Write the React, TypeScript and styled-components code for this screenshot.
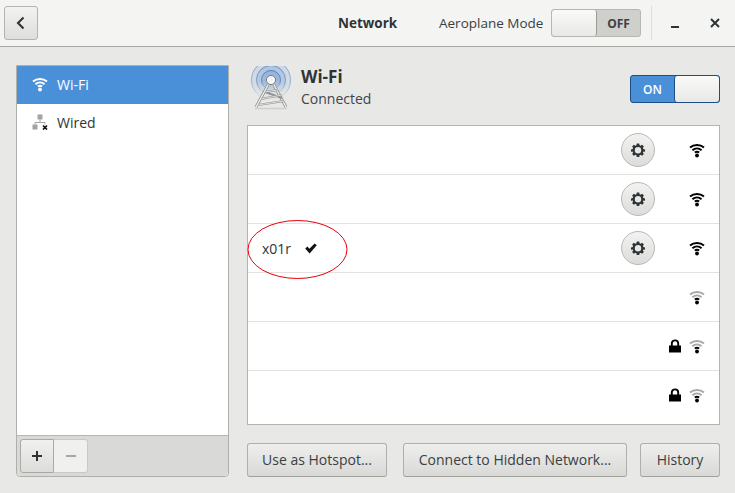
import React from "react";
import styled, { createGlobalStyle } from "styled-components";

const GlobalStyle = createGlobalStyle`
  html, body {
    margin: 0;
    padding: 0;
    width: 735px;
    height: 493px;
    overflow: hidden;
    background: #e8e8e7;
  }
  body {
    font-family: "Open Sans", "Noto Sans", sans-serif;
    font-size: 14px;
    color: #2e3436;
  }
`;

const WifiIcon = ({ color = "#000", faded = false, size = 16 }: { color?: string; faded?: boolean; size?: number }) => (
  <svg width={size} height={size} viewBox="0 0 16 16" fill="none">
    <path d="M1 5.6C4.9 2.2 11.1 2.2 15 5.6" stroke={faded ? "#a8a8a8" : color} strokeWidth="2" />
    <path d="M3.4 8.2C6.1 6 9.9 6 12.6 8.2" stroke={faded ? "#a8a8a8" : color} strokeWidth="2" />
    <path d="M5.8 10.6C7.2 9.5 8.8 9.5 10.2 10.6" stroke={color} strokeWidth="1.9" />
    <circle cx="8" cy="13.5" r="1.9" fill={color} />
  </svg>
);

const WiredIcon = () => (
  <svg width="16" height="16" viewBox="0 0 16 16">
    <rect x="5.5" y="0.5" width="5" height="5" fill="#a3a3a3" />
    <rect x="0.5" y="10.5" width="5" height="5" fill="#a3a3a3" />
    <path d="M8 5.5V8.5M3 10.5V8.5H13V10.5" stroke="#a3a3a3" strokeWidth="1" fill="none" />
    <path d="M11 11.5L15 15.5M15 11.5L11 15.5" stroke="#111" strokeWidth="1.7" />
  </svg>
);

const TowerIcon = () => (
  <svg width="44" height="46" viewBox="0 0 44 46" fill="none">
    <defs>
      <linearGradient id="waveFill" x1="0" y1="0" x2="0" y2="1">
        <stop offset="0" stopColor="#7fa4d8" stopOpacity="0.55" />
        <stop offset="0.55" stopColor="#7fa4d8" stopOpacity="0.45" />
        <stop offset="1" stopColor="#7fa4d8" stopOpacity="0" />
      </linearGradient>
      <linearGradient id="waveLine" x1="0" y1="0" x2="0" y2="1">
        <stop offset="0" stopColor="#4a78b8" stopOpacity="0.85" />
        <stop offset="0.6" stopColor="#4a78b8" stopOpacity="0.7" />
        <stop offset="1" stopColor="#4a78b8" stopOpacity="0" />
      </linearGradient>
    </defs>
    <circle cx="22" cy="14" r="20" fill="url(#waveFill)" opacity="0.45" />
    <circle cx="22" cy="14" r="19.5" stroke="url(#waveLine)" strokeWidth="1" opacity="0.6" />
    <circle cx="22" cy="14" r="15" fill="url(#waveFill)" opacity="0.7" />
    <circle cx="22" cy="14" r="14.5" stroke="url(#waveLine)" strokeWidth="1" opacity="0.75" />
    <circle cx="22" cy="14" r="10" fill="url(#waveFill)" />
    <circle cx="22" cy="14" r="9.5" stroke="url(#waveLine)" strokeWidth="1" />
    <path d="M19 19L7 41M25 19L37 41" stroke="#8f918d" strokeWidth="2.8" />
    <path d="M19 19L7 41M25 19L37 41" stroke="#f4f4f2" strokeWidth="1.3" />
    <path d="M16 26L29 24M12 33L33 29M9 39L35 35M16 26L33 32" stroke="#93958f" strokeWidth="1.9" />
    <path d="M16 26L29 24M12 33L33 29M9 39L35 35" stroke="#eeeeec" strokeWidth="0.8" />
    <circle cx="22" cy="14" r="4.6" fill="#f4f4f2" stroke="#7d7f7a" strokeWidth="1" />
    <path d="M6 42.5H38" stroke="#cfcfcc" strokeWidth="1.5" />
  </svg>
);

const GearIcon = () => (
  <svg width="14" height="14" viewBox="0 0 16 16">
    <path
      fill="#2e3436"
      fillRule="evenodd"
      d="M6.6 0.5H9.4L9.8 2.6C10.2 2.75 10.6 2.9 10.95 3.15L12.75 2L14.7 3.95L13.55 5.75C13.8 6.1 13.95 6.5 14.05 6.9L16 7.3V10.1L14.05 9.6C13.95 10 13.8 10.4 13.55 10.75L14.7 12.55L12.75 14.5L10.95 13.35C10.6 13.6 10.2 13.75 9.8 13.9L9.4 16H6.6L6.2 13.9C5.8 13.75 5.4 13.6 5.05 13.35L3.25 14.5L1.3 12.55L2.45 10.75C2.2 10.4 2.05 10 1.95 9.6L0 10.1V7.3L1.95 6.9C2.05 6.5 2.2 6.1 2.45 5.75L1.3 3.95L3.25 2L5.05 3.15C5.4 2.9 5.8 2.75 6.2 2.6ZM8 4.6A3.65 3.65 0 1 0 8 11.9A3.65 3.65 0 1 0 8 4.6Z"
    />
  </svg>
);

const CheckIcon = () => (
  <svg width="12" height="11" viewBox="0 0 12 11">
    <path d="M0.2 5.6L2.4 3.6L4.4 5.8L9.6 0.4L11.8 2.2L4.6 10.4Z" fill="#111" />
  </svg>
);

const LockIcon = () => (
  <svg width="14" height="14" viewBox="0 0 14 14">
    <path d="M1 6.5H13V13.5H1Z" fill="#000" />
    <path d="M3.8 7V4.4C3.8 2.5 5.2 1.4 7 1.4C8.8 1.4 10.2 2.5 10.2 4.4V7" fill="none" stroke="#000" strokeWidth="1.9" />
  </svg>
);

const Window = styled.div`
  width: 735px;
  height: 493px;
  display: flex;
  flex-direction: column;
`;

const HeaderBar = styled.header`
  height: 46px;
  flex: none;
  display: flex;
  align-items: center;
  padding-left: 4px;
  background: #f4f4f3;
  border-top: 1px solid #e4e4e2;
  border-bottom: 1px solid #a8a8a4;
  margin-top: -1px;
`;

const BackButton = styled.button`
  width: 34px;
  height: 34px;
  flex: none;
  padding: 0;
  display: flex;
  align-items: center;
  justify-content: center;
  border: 1px solid #b4b4af;
  border-radius: 3px;
  background: linear-gradient(#f2f2f1, #dededc);
`;

const HeaderTitle = styled.div`
  width: 101px;
  margin-left: 300px;
  flex: none;
  font-size: 13.5px;
  font-weight: 700;
  color: #2e3436;
  white-space: nowrap;
`;

const AeroLabel = styled.span`
  width: 112px;
  flex: none;
  font-size: 13.5px;
  color: #3a3f41;
  white-space: nowrap;
`;

const Switch = styled.div<{ $on?: boolean }>`
  width: 90px;
  height: 28px;
  flex: none;
  box-sizing: border-box;
  display: flex;
  flex-direction: ${({ $on }) => ($on ? "row" : "row-reverse")};
  border: 1px solid ${({ $on }) => ($on ? "#1c4d85" : "#b7b7b2")};
  border-radius: 3px;
  background: ${({ $on }) => ($on ? "#4a90d9" : "#cfcfcc")};
  overflow: hidden;
`;

const SwitchLabel = styled.span<{ $on?: boolean }>`
  flex: 1;
  display: flex;
  align-items: center;
  justify-content: center;
  font-size: 12px;
  font-weight: ${({ $on }) => ($on ? 600 : 700)};
  color: ${({ $on }) => ($on ? "#fff" : "#3d4143")};
`;

const SwitchThumb = styled.span<{ $on?: boolean }>`
  width: 45px;
  flex: none;
  box-sizing: border-box;
  background: linear-gradient(#fafaf9, #e8e8e6);
  border-${({ $on }) => ($on ? "left" : "right")}: 1px solid ${({ $on }) => ($on ? "#1c4d85" : "#9b9b96")};
  border-radius: 3px;
`;

const HeaderDivider = styled.div`
  width: 1px;
  height: 34px;
  margin: 0 3px 0 10px;
  background: #dcdcda;
  flex: none;
`;

const WindowControl = styled.div`
  width: 40px;
  height: 34px;
  flex: none;
  display: flex;
  align-items: center;
  justify-content: center;
`;

const Body = styled.main`
  flex: 1;
  display: flex;
  gap: 18px;
  padding: 18px 15px 16px 16px;
  min-height: 0;
`;

const Sidebar = styled.aside`
  width: 213px;
  flex: none;
  box-sizing: border-box;
  display: flex;
  flex-direction: column;
  border: 1px solid #b0b0ab;
  border-radius: 0 0 4px 4px;
  background: #fff;
`;

const SideItem = styled.div<{ $active?: boolean }>`
  height: 38px;
  flex: none;
  box-sizing: border-box;
  display: flex;
  align-items: center;
  gap: 9px;
  padding: 0 0 2px 15px;
  font-size: 14px;
  background: ${({ $active }) => ($active ? "#4a90d9" : "transparent")};
  color: ${({ $active }) => ($active ? "#fff" : "#2e3436")};
`;

const SideFooter = styled.div`
  margin-top: auto;
  height: 41px;
  box-sizing: border-box;
  display: flex;
  padding: 3px;
  background: #d9d9d7;
  border-top: 1px solid #b6b6b2;
  border-radius: 0 0 4px 4px;
`;

const FooterButton = styled.button<{ $disabled?: boolean; $first?: boolean }>`
  width: 34px;
  height: 34px;
  padding: 0;
  display: flex;
  align-items: center;
  justify-content: center;
  border: 1px solid ${({ $disabled }) => ($disabled ? "#c9c9c6" : "#a9a9a5")};
  border-left-width: ${({ $first }) => ($first ? 1 : 0)}px;
  border-radius: ${({ $first }) => ($first ? "3px 0 0 3px" : "0 3px 3px 0")};
  background: ${({ $disabled }) => ($disabled ? "#f0f0ef" : "linear-gradient(#f1f1f0, #dcdcda)")};
`;

const Content = styled.section`
  flex: 1;
  min-width: 0;
  display: flex;
  flex-direction: column;
`;

const DeviceHeader = styled.div`
  height: 60px;
  flex: none;
  display: flex;
  margin-left: 2px;
  margin-top: -2px;
`;

const DeviceIcon = styled.div`
  width: 52px;
  flex: none;
  padding-top: 3px;
`;

const DeviceText = styled.div`
  flex: 1;
  padding-top: 3px;
`;

const DeviceName = styled.div`
  font-size: 17px;
  font-weight: 700;
  line-height: 22px;
  color: #2e3436;
`;

const DeviceStatus = styled.div`
  font-size: 14px;
  line-height: 21px;
  color: #3f4547;
`;

const SwitchSlot = styled.div`
  padding-top: 12px;
`;

const NetworkList = styled.div`
  height: 300px;
  flex: none;
  box-sizing: border-box;
  margin-top: 2px;
  border: 1px solid #b4b4af;
  background: #fff;
  display: flex;
  flex-direction: column;
`;

const NetworkRow = styled.div<{ $last?: boolean }>`
  height: ${({ $last }) => ($last ? 53 : 49)}px;
  flex: none;
  box-sizing: border-box;
  position: relative;
  display: flex;
  align-items: center;
  padding: ${({ $last }) => ($last ? "0 14px 5px 14px" : "0 14px")};
  border-bottom: ${({ $last }) => ($last ? "none" : "1px solid #e2e2e0")};
`;

const NetworkName = styled.span`
  font-size: 14px;
  color: #2e3436;
  margin-right: 14px;
`;

const RowEnd = styled.div`
  margin-left: auto;
  display: flex;
  align-items: center;
`;

const GearButton = styled.button`
  width: 34px;
  height: 34px;
  padding: 0;
  margin-right: 34px;
  display: flex;
  align-items: center;
  justify-content: center;
  border: 1px solid #b9b9b5;
  border-radius: 50%;
  background: linear-gradient(#f2f2f1, #dcdcda);
`;

const LockSlot = styled.span`
  display: flex;
  margin-right: 7px;
`;

const Annotation = styled.svg`
  position: absolute;
  left: -1px;
  top: -5px;
  pointer-events: none;
`;

const ActionRow = styled.div`
  flex: none;
  margin-top: 18px;
  display: flex;
`;

const ActionButton = styled.button<{ $w: number; $gap?: number }>`
  width: ${({ $w }) => $w}px;
  height: 34px;
  margin-right: ${({ $gap }) => $gap ?? 0}px;
  padding: 0 0 2px;
  border: 1px solid #b0b0ab;
  border-bottom-color: #a0a09b;
  border-radius: 3px;
  background: linear-gradient(#eeeeed, #d9d9d7);
  font-family: inherit;
  font-size: 14px;
  color: #3a3f41;
`;

const rows = [
  { gear: true },
  { gear: true },
  { gear: true, name: "x01r" },
  {},
  { lock: true, faded: true },
  { lock: true, faded: true },
];

export default function App() {
  return (
    <>
      <GlobalStyle />
      <Window>
        <HeaderBar>
          <BackButton>
            <svg width="12" height="14" viewBox="0 0 12 14" fill="none">
              <path d="M8.5 1.5L3 7L8.5 12.5" stroke="#2e3436" strokeWidth="2.1" />
            </svg>
          </BackButton>
          <HeaderTitle>Network</HeaderTitle>
          <AeroLabel>Aeroplane Mode</AeroLabel>
          <Switch>
            <SwitchLabel>OFF</SwitchLabel>
            <SwitchThumb />
          </Switch>
          <HeaderDivider />
          <WindowControl>
            <svg width="10" height="12" viewBox="0 0 10 12">
              <rect x="1" y="9" width="8" height="2" fill="#2e3436" />
            </svg>
          </WindowControl>
          <WindowControl>
            <svg width="10" height="10" viewBox="0 0 10 10">
              <path d="M1 1L9 9M9 1L1 9" stroke="#2e3436" strokeWidth="2" />
            </svg>
          </WindowControl>
        </HeaderBar>
        <Body>
          <Sidebar>
            <SideItem $active>
              <WifiIcon color="#fff" />
              Wi-Fi
            </SideItem>
            <SideItem>
              <WiredIcon />
              Wired
            </SideItem>
            <SideFooter>
              <FooterButton $first>
                <svg width="12" height="12" viewBox="0 0 12 12">
                  <path d="M6 1V11M1 6H11" stroke="#2e3436" strokeWidth="2" />
                </svg>
              </FooterButton>
              <FooterButton $disabled>
                <svg width="12" height="12" viewBox="0 0 12 12">
                  <path d="M1 6H11" stroke="#a5a7a5" strokeWidth="2" />
                </svg>
              </FooterButton>
            </SideFooter>
          </Sidebar>
          <Content>
            <DeviceHeader>
              <DeviceIcon>
                <TowerIcon />
              </DeviceIcon>
              <DeviceText>
                <DeviceName>Wi-Fi</DeviceName>
                <DeviceStatus>Connected</DeviceStatus>
              </DeviceText>
              <SwitchSlot>
                <Switch $on>
                  <SwitchLabel $on>ON</SwitchLabel>
                  <SwitchThumb $on />
                </Switch>
              </SwitchSlot>
            </DeviceHeader>
            <NetworkList>
              {rows.map((row, i) => (
                <NetworkRow key={i} $last={i === rows.length - 1}>
                  {row.name && (
                    <>
                      <NetworkName>{row.name}</NetworkName>
                      <CheckIcon />
                      <Annotation width="102" height="62" viewBox="0 0 102 62" fill="none">
                        <ellipse cx="50.5" cy="30.5" rx="49.5" ry="29" stroke="#e8000b" strokeWidth="1" />
                      </Annotation>
                    </>
                  )}
                  <RowEnd>
                    {row.gear && (
                      <GearButton>
                        <GearIcon />
                      </GearButton>
                    )}
                    {row.lock && (
                      <LockSlot>
                        <LockIcon />
                      </LockSlot>
                    )}
                    <WifiIcon faded={row.faded || i === 3} />
                  </RowEnd>
                </NetworkRow>
              ))}
            </NetworkList>
            <ActionRow>
              <ActionButton $w={140} $gap={16}>Use as Hotspot...</ActionButton>
              <ActionButton $w={224} $gap={13}>Connect to Hidden Network...</ActionButton>
              <ActionButton $w={80}>History</ActionButton>
            </ActionRow>
          </Content>
        </Body>
      </Window>
    </>
  );
}
